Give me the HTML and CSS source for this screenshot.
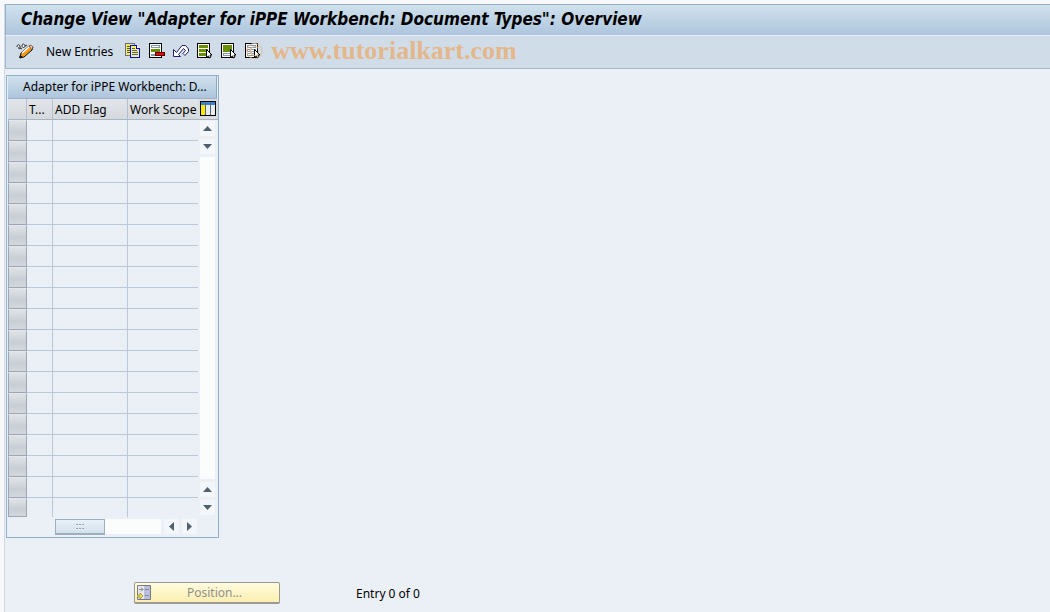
FILE: index.html
```html
<!DOCTYPE html>
<html lang="en">
<head>
  <meta charset="UTF-8">
  <meta name="viewport" content="width=device-width, initial-scale=1.0">
  <title>Change View "Adapter for iPPE Workbench: Document Types": Overview</title>
  <link rel="stylesheet" href="styles.css">
</head>
<body>

<div class="window">
  <header class="titlebar">
    <h1>Change View "Adapter for iPPE Workbench: Document Types": Overview</h1>
  </header>

  <div class="toolbar">
    <button class="tool" aria-label="Display/Change">
      <svg width="18" height="16" viewBox="0 0 18 16">
        <path d="M1 4c0-3 3-3 3 0s-2 2-1 0M6 3c0-3 3-2 3 0s-3 2-3 0M4 5l2 1M9 3l2-1" fill="#fff" stroke="#222"/>
        <path d="M5 10l8-7 4 1-1 3-8 7-4 1z" fill="#f39a1c" stroke="#111"/>
        <path d="M6 10l8-7" stroke="#fff" stroke-width="1.500"/>
        <path d="M13 3l2-1 2 2-1 3z" fill="#f8b9a0" stroke="#333" stroke-width=".6"/>
        <path d="M4 12l3 2-4 1z" fill="#111"/>
      </svg>
    </button>
    <button class="tool tool-text">New Entries</button>
    <button class="tool" aria-label="Copy As">
      <svg width="16" height="16" viewBox="0 0 16 16" shape-rendering="crispEdges">
        <path d="M.5 .5h9v12h-9z" fill="#f4ea5c" stroke="#68707a"/>
        <path d="M2 3.500h3M2 5.500h3M2 7.500h3M2 9.500h3" stroke="#4b5670"/>
        <path d="M5.500 2.500h6l3 3v9h-9z" fill="#fdf36a" stroke="#0000f0"/>
        <path d="M11.500 2.500v3h3" fill="#fff" stroke="#0000f0"/>
        <path d="M7 5.500h3M7 7.500h5M7 9.500h6M7 11.500h6" stroke="#4a5f8a"/>
      </svg>
    </button>
    <button class="tool" aria-label="Delete">
      <svg width="16" height="16" viewBox="0 0 16 16" shape-rendering="crispEdges">
        <path d="M.5 .5h12v14H.5z" fill="#fff" stroke="#000"/>
        <path d="M2.500 2.500h8v2h-8zM2.500 11.500h8v1h-8z" fill="#fff" stroke="#8299aa"/>
        <path d="M2 6h9v3H2z" fill="#688f00"/>
        <path d="M6.500 9.500h9v3h-9z" fill="#f00000" stroke="#500"/>
      </svg>
    </button>
    <button class="tool" aria-label="Undo Change">
      <svg width="16" height="16" viewBox="0 0 16 16">
        <path d="M.5 6.500v7h7L5.500 11.500l5-6 2 2-2.500 3 2 2 3.500-4V6l-3-3.500H9l-5.500 7z" fill="#fff" stroke="#20206c"/>
      </svg>
    </button>
    <button class="tool" aria-label="Select All">
      <svg width="16" height="16" viewBox="0 0 16 16" shape-rendering="crispEdges">
        <path d="M.5 .5h12v14H.5z" fill="#fff" stroke="#000"/>
        <path d="M2 2h9v3H2zM2 6h9v3H2zM2 10h9v3H2z" fill="#688f00"/>
        <path d="M9.500 6.500v8l2-1.500 1 2 1.500-1-1-2h2z" fill="#fff" stroke="#000" shape-rendering="auto"/>
      </svg>
    </button>
    <button class="tool" aria-label="Select Block">
      <svg width="16" height="16" viewBox="0 0 16 16" shape-rendering="crispEdges">
        <path d="M.5 .5h12v14H.5z" fill="#fff" stroke="#000"/>
        <path d="M2 2h9v7H2z" fill="#688f00"/>
        <path d="M2.500 10.500h7v2h-7z" fill="#fff" stroke="#8299aa"/>
        <path d="M9.500 6.500v8l2-1.500 1 2 1.500-1-1-2h2z" fill="#fff" stroke="#000" shape-rendering="auto"/>
      </svg>
    </button>
    <button class="tool" aria-label="Deselect All">
      <svg width="16" height="16" viewBox="0 0 16 16" shape-rendering="crispEdges">
        <path d="M.5 .5h12v14H.5z" fill="#fff" stroke="#000"/>
        <path d="M2.500 2.500h8v2h-8zM2.500 6.500h8v2h-8zM2.500 10.500h8v2h-8z" fill="#fff" stroke="#8299aa"/>
        <path d="M9.500 6.500v8l2-1.500 1 2 1.500-1-1-2h2z" fill="#fff" stroke="#000" shape-rendering="auto"/>
      </svg>
    </button>
    <span class="watermark"><span class="copyright">©</span>www.tutorialkart.com</span>
  </div>

  <main class="content">
    <section class="table-control">
      <h2>Adapter for iPPE Workbench: D...</h2>
      <div class="table-body">
        <table>
          <colgroup>
            <col class="col-select"><col class="col-type"><col class="col-flag"><col class="col-scope">
          </colgroup>
          <thead>
            <tr><th></th><th>T...</th><th>ADD Flag</th><th>Work Scope</th></tr>
          </thead>
          <tbody id="rows"></tbody>
        </table>
        <div class="side">
          <button class="config" aria-label="Table Settings">
            <svg width="16" height="16" viewBox="0 0 16 16" shape-rendering="crispEdges">
              <path d="M.5 .5h15v14H.5z" fill="#fff" stroke="#000"/>
              <path d="M1 1h14v3H1z" fill="#3b86c8"/>
              <path d="M1 4h4v10H1z" fill="#ffe800"/>
              <path d="M6 4h4v10H6zM11 4h4v10h-4z" fill="#e8ecf0"/>
              <path d="M5.500 2v12M10.500 2v12" stroke="#526777"/>
            </svg>
          </button>
          <div class="vscroll">
            <button class="arrow" aria-label="Page up"><svg width="9" height="5"><path d="M0 5L4.500 0 9 5z"/></svg></button>
            <button class="arrow" aria-label="Line down"><svg width="9" height="5"><path d="M0 0h9L4.500 5z"/></svg></button>
            <div class="track"></div>
            <button class="arrow" aria-label="Line up"><svg width="9" height="5"><path d="M0 5L4.500 0 9 5z"/></svg></button>
            <button class="arrow" aria-label="Page down"><svg width="9" height="5"><path d="M0 0h9L4.500 5z"/></svg></button>
          </div>
        </div>
      </div>
      <div class="hscroll">
        <div class="track">
          <div class="thumb">
            <svg width="8" height="6" shape-rendering="crispEdges"><path d="M0 .5h2M3 .5h2M6 .5h2M0 4.500h2M3 4.500h2M6 4.500h2" stroke="#8fa3b4"/><path d="M0 1.500h1M3 1.500h1M6 1.500h1M0 5.500h1M3 5.500h1M6 5.500h1" stroke="#fff"/></svg>
          </div>
        </div>
        <button class="arrow" aria-label="Scroll left"><svg width="5" height="9"><path d="M5 0v9L0 4.500z"/></svg></button>
        <button class="arrow" aria-label="Scroll right"><svg width="5" height="9"><path d="M0 0v9L5 4.500z"/></svg></button>
      </div>
    </section>

    <div class="footer">
      <button class="position">
        <svg width="15" height="15" viewBox="0 0 15 15">
          <path d="M.5 .5h13v14H.5z" fill="#e8e8ea" stroke="#747b85"/>
          <path d="M7 1h6v13H7z" fill="#b9bfdc"/>
          <path d="M2 4.500h4M4 2.500l2 2-2 2M8 4.500h4M8 10.500h4" fill="none" stroke="#858b98"/>
          <path d="M0 10h3V8l3 3-3 3v-2H0z" fill="#f7e13c" stroke="#8b813e" stroke-width=".7"/>
        </svg>
        <span>Position...</span>
      </button>
      <span class="entry">Entry 0 of 0</span>
    </div>
  </main>
</div>

<script>
  const rowCount = 19;
  const rows = document.getElementById('rows');

  for (let i = 0; i < rowCount; i++) {
    const row = rows.insertRow();
    for (let j = 0; j < 4; j++) {
      row.insertCell();
    }
  }
</script>

</body>
</html>
```
FILE: styles.css
```css
* {
  box-sizing: border-box;
}
body {
  margin: 0;
  padding: 4px 0 0 4px;
  min-height: 100vh;
  display: flex;
  background: #f7f8fb;
  color: #000;
  font-family: "Noto Sans", sans-serif;
  font-size: 12px;
}
button {
  font: inherit;
  color: inherit;
  padding: 0;
  border: none;
  background: none;
  cursor: pointer;
}
svg {
  display: block;
}
.window {
  flex: 1;
  min-width: 0;
  border-left: 1px solid #d3dae6;
  background: #ebf0f7;
}
.titlebar {
  height: 32px;
  padding: 0 15px;
  display: flex;
  align-items: center;
  border-top: 1px solid #97afc5;
  border-left: 1px solid #97afc5;
  border-bottom: 1px solid #e6eff7;
  background: linear-gradient(#d1e1ed, #adc5dd);
}
.titlebar h1 {
  margin: 0;
  padding-bottom: 3px;
  font-family: "DejaVu Sans Condensed", "DejaVu Sans", sans-serif;
  font-size: 17px;
  font-style: italic;
  font-weight: bold;
  white-space: nowrap;
}
.toolbar {
  height: 33px;
  padding: 0 10px 2px;
  display: flex;
  align-items: center;
  gap: 8px;
  border-left: 1px solid #a5b7cc;
  border-bottom: 1px solid #a5b7cc;
  background: #d0dde8;
}
.tool-text {
  margin: 0 4px;
  white-space: nowrap;
}
.watermark {
  position: relative;
  margin-left: 2px;
  color: #e4b78b;
  font-family: "Liberation Serif", serif;
  font-size: 26px;
  font-weight: bold;
  line-height: 30px;
}
/* the sign overlaps the last toolbar icon */
.copyright {
  position: absolute;
  left: -26px;
  top: 0;
  font-size: 24px;
  font-weight: normal;
  opacity: 0.8;
}
.content {
  padding: 6px 1px;
}
.table-control {
  width: 213px;
  padding: 0 1px 2px;
  border: 1px solid #8fafc9;
}
.table-control h2 {
  margin: 0;
  padding: 0 8px 0 15px;
  height: 23px;
  line-height: 21px;
  font-size: 12px;
  font-weight: normal;
  white-space: nowrap;
  border-right: 1px solid #8fa9c1;
  border-bottom: 1px solid #9db2c6;
  background: linear-gradient(#d1e1ed, #adc5dd);
}
.table-body {
  display: flex;
}
table {
  width: 190px;
  table-layout: fixed;
  border-collapse: separate;
  border-spacing: 0;
}
.col-select {
  width: 19px;
}
.col-type {
  width: 26px;
}
.col-flag {
  width: 75px;
}
.col-scope {
  width: 70px;
}
th {
  height: 21px;
  padding: 0 0 0 2px;
  text-align: left;
  font-weight: normal;
  white-space: nowrap;
  border-right: 1px solid #b4bfcb;
  border-bottom: 1px solid #a9b5c1;
  background: linear-gradient(#e2e5e9, #d4d9de);
}
td {
  height: 21px;
  padding: 0;
  border-right: 1px solid #bdc8d7;
  border-bottom: 1px solid #bdc8d7;
}
th:last-child,
td:last-child {
  border-right: none;
}
tr:last-child td {
  height: 19px;
  border-bottom: none;
}
tbody td:first-child,
tbody tr:last-child td:first-child {
  border: 1px solid #9da7b3;
  border-top-color: #e3e7eb;
  background: linear-gradient(#dfe3e7, #c8ced5 60%, #d3d8dd);
}
.side {
  flex: 1;
  display: flex;
  flex-direction: column;
}
.config {
  height: 21px;
  padding: 2px;
  background: #d9dde2;
  border-bottom: 1px solid #a9b5c1;
}
.vscroll {
  flex: 1;
  padding: 1px 2px 2px;
  display: flex;
  flex-direction: column;
  gap: 3px;
}
.arrow {
  width: 15px;
  height: 15px;
  display: flex;
  align-items: center;
  justify-content: center;
  background: #f3f6fa;
}
.arrow path {
  fill: #4e6070;
}
.track {
  flex: 1;
  background: #fbfcfc;
}
.vscroll .track {
  width: 15px;
}
.hscroll {
  height: 18px;
  padding: 2px 20px 1px 47px;
  display: flex;
  gap: 3px;
}
.thumb {
  width: 50px;
  height: 16px;
  display: flex;
  align-items: center;
  justify-content: center;
  border: 1px solid #9faebd;
  border-bottom-width: 2px;
  background: linear-gradient(#e9f1f8, #d3e1ec);
}
.footer {
  margin: 44px 0 0 128px;
  display: flex;
  align-items: center;
  gap: 76px;
}
.position {
  width: 146px;
  height: 22px;
  padding: 0 2px;
  display: flex;
  align-items: center;
  border: 1px solid #9a9a92;
  border-bottom-width: 2px;
  border-radius: 2px;
  background: linear-gradient(#fffbe0, #fcefb0);
  color: #8f8f8b;
}
.position span {
  flex: 1;
}
```
